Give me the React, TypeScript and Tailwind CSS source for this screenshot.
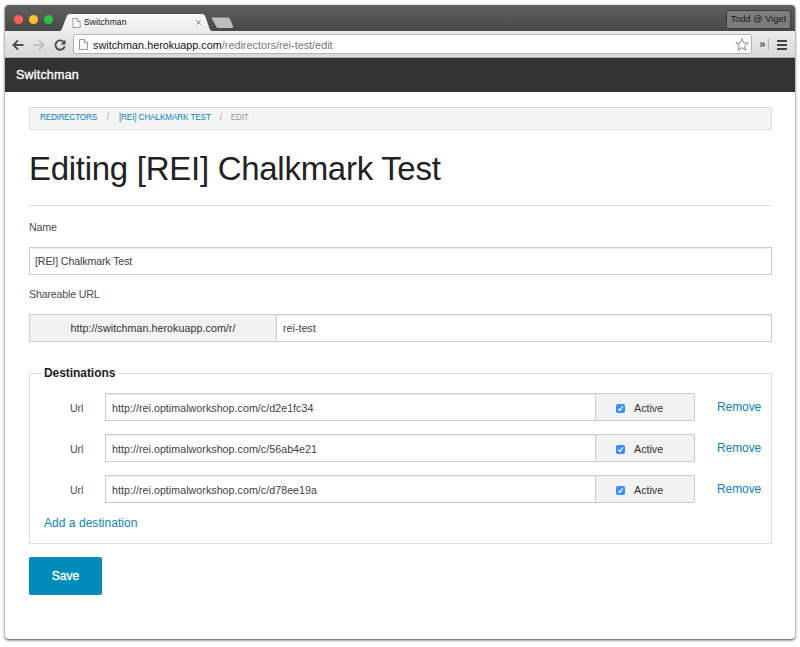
import React from "react";

const destinations = [
  "http://rei.optimalworkshop.com/c/d2e1fc34",
  "http://rei.optimalworkshop.com/c/56ab4e21",
  "http://rei.optimalworkshop.com/c/d78ee19a",
];

function PageIcon({ className }: { className: string }) {
  return (
    <svg className={className} viewBox="0 0 9 11" fill="#fafafa" stroke="#8c8c8c" strokeWidth="0.9">
      <path d="M.5.5h4.7l3.3 3.2v6.8h-8z" />
      <path d="M5.2.5v3.2h3.3" />
    </svg>
  );
}

function TitleBar() {
  return (
    <div className="flex h-[26px] items-start rounded-t-[4px] bg-linear-to-b from-[#606060] to-[#484848]">
      <div className="flex gap-[6px] pt-[10px] pl-[9px]">
        <span className="h-[9px] w-[9px] rounded-full bg-[#ff5f57]" />
        <span className="h-[9px] w-[9px] rounded-full bg-[#ffbd2e]" />
        <span className="h-[9px] w-[9px] rounded-full bg-[#28c940]" />
      </div>
      <div className="relative ml-[7px] h-[26px] w-[180px]">
        <svg className="absolute inset-0" width="180" height="26" viewBox="0 0 180 26">
          <defs>
            <linearGradient id="tab" x1="0" y1="0" x2="0" y2="1">
              <stop offset="0" stopColor="#fafafa" />
              <stop offset="1" stopColor="#ececec" />
            </linearGradient>
          </defs>
          <path d="M-1 26C1 26 1.500 25 2 23.500L6.500 12C7.300 9.700 8 9 10 9H142C144 9 144.700 9.700 145.500 12L149.500 23.500C150.200 25.200 151 26 153 26Z" fill="url(#tab)" />
          <path d="M152.500 12.500H167C169 12.500 169.700 13 170.500 15L172.900 21.200C173.300 22.500 173.100 23 171.800 23H158.800C157.100 23 156.600 22.500 155.900 21L152 14C151.500 13 151.500 12.500 152.500 12.500Z" fill="#bdbdbd" />
        </svg>
        <div className="relative flex h-full items-center pt-[9px] pl-[12px]">
          <PageIcon className="h-[10px] w-[9px]" />
          <span className="ml-[3px] text-[8.500px] leading-none tracking-[0.1px] text-[#111]">Switchman</span>
          <svg className="mr-[39px] ml-auto h-[5px] w-[5px]" viewBox="0 0 5 5" stroke="#777" strokeWidth="1">
            <path d="M.3.300l4.400 4.400M4.700.300.300 4.700" />
          </svg>
        </div>
      </div>
      <div className="mt-[5px] mr-[4px] ml-auto flex h-[19px] w-[65px] items-center justify-center rounded-[2px] border border-[#3c3c3c] bg-[#7e7e7e] text-[9px] tracking-[0.14px] whitespace-nowrap text-[#161616]">
        Todd @ Viget
      </div>
    </div>
  );
}

function Toolbar() {
  return (
    <div className="flex h-[27px] items-center border-b border-[#aaa] bg-linear-to-b from-[#ececec] to-[#d9d9d9] pl-[7px]">
      <svg className="mt-[1px] h-[12px] w-[12px]" viewBox="0 0 12 12" fill="none" stroke="#4d4d4d" strokeWidth="1.9">
        <path d="M11.500 6H1.600M6 1.300 1.400 6 6 10.700" />
      </svg>
      <svg className="mt-[1px] ml-[9px] h-[12px] w-[12px]" viewBox="0 0 12 12" fill="none" stroke="#b9b9b9" strokeWidth="1.700">
        <path d="M.500 6h9.900M6 1.300 10.600 6 6 10.700" />
      </svg>
      <svg className="mt-[1px] ml-[9px] h-[12px] w-[12px]" viewBox="0 0 12 12" fill="none" stroke="#4d4d4d" strokeWidth="1.900">
        <path d="M9.800 3A4.700 4.700 0 1 0 10.700 7.400" />
        <path d="M11.500.500v5H6.500z" fill="#4d4d4d" stroke="none" />
      </svg>
      <div className="ml-[7px] flex h-[20px] w-[679px] items-center rounded-[3px] border border-[#b4b4b4] bg-white pl-[5px]">
        <PageIcon className="h-[11px] w-[9px]" />
        <div className="mt-[2px] ml-[5px] text-[10.800px] leading-none tracking-[0.015px] whitespace-nowrap text-[#777]">
          <span className="text-[#111]">switchman.herokuapp.com</span>/redirectors/rei-test/edit
        </div>
        <svg className="mr-[2px] ml-auto h-[13px] w-[14px]" viewBox="0 0 14 13" fill="none" stroke="#888" strokeWidth="1" strokeLinejoin="round">
          <path d="M7 .700 8.700 4.800 13.200 5 9.700 7.800 10.900 12.200 7 9.700 3.100 12.200 4.300 7.800.800 5 5.300 4.800z" />
        </svg>
      </div>
      <svg className="ml-[8px] h-[5px] w-[5px]" viewBox="0 0 5 5" fill="none" stroke="#555" strokeWidth="1.200">
        <path d="M.300.500 2.200 2.500.300 4.500M2.800.500 4.700 2.500 2.800 4.500" />
      </svg>
      <span className="ml-[3px] h-[12px] w-px bg-[#b8b8b8]" />
      <span className="mt-[1px] ml-[8px] flex w-[10px] flex-col gap-[2px]">
        <i className="h-[2px] bg-[#444]" />
        <i className="h-[2px] bg-[#444]" />
        <i className="h-[2px] bg-[#444]" />
      </span>
    </div>
  );
}

function DestinationRow({ url }: { url: string }) {
  return (
    <div className="flex h-[28px] items-center">
      <span className="w-[61px] pt-[2px] pl-[26px] text-[10.700px] tracking-[-0.1px] text-[#4d4d4d]">Url</span>
      <div className="flex h-[28px] w-[491px] items-center border border-[#ccc] pt-[2px] pl-[6px] text-[10.700px] tracking-[0.03px] text-[#3f3f3f] shadow-[inset_0_1px_1px_rgba(0,0,0,0.08)]">{url}</div>
      <div className="-ml-px flex h-[28px] w-[100px] items-center rounded-r-[2px] border border-[#ccc] bg-[#f2f2f2] pt-[2px] pl-[20px] text-[10.700px] text-[#333]">
        <svg className="h-[9px] w-[9px]" viewBox="0 0 9 9">
          <rect width="9" height="9" rx="1.800" fill="#3b8ff8" />
          <path d="M2.300 4.800 3.900 6.500 6.700 2.400" fill="none" stroke="#fff" strokeWidth="1.200" />
        </svg>
        <span className="ml-[9px]">Active</span>
      </div>
      <a className="mb-[1px] ml-[22px] text-[12px] tracking-[-0.08px] text-[#0c82b8]">Remove</a>
    </div>
  );
}

export default function App() {
  return (
    <div className="h-[647px] w-[800px] overflow-hidden bg-white px-[5px] pt-[5px] font-['Liberation_Sans',Arial,sans-serif]">
      <div className="flex h-[634px] w-[790px] flex-col rounded-[4px] bg-white shadow-[0_1px_3px_rgba(0,0,0,0.75)]">
        <TitleBar />
        <Toolbar />
        <div className="flex h-[34px] items-center bg-[#333] pl-[11px] text-[12.500px] tracking-[0.2px] text-white [-webkit-text-stroke:0.350px_white]">Switchman</div>
        <main className="flex flex-col px-[24px] pt-[15px]">
          <nav className="flex h-[23px] w-[743px] items-center rounded-[2px] border border-[#dcdcdc] bg-[#f4f4f4] pl-[10px] text-[8.200px] whitespace-nowrap text-[#0c82b8]">
            <a className="tracking-[-0.23px]">REDIRECTORS</a>
            <span className="w-[22px] text-center text-[#999]">/</span>
            <a className="tracking-[-0.13px]">[REI] CHALKMARK TEST</a>
            <span className="w-[20px] text-center text-[#999]">/</span>
            <span className="tracking-[-0.22px] text-[#999]">EDIT</span>
          </nav>
          <h1 className="mt-[15px] h-[48px] text-[33px] leading-[48px] tracking-[-0.280px] whitespace-nowrap text-[#222]">Editing [REI] Chalkmark Test</h1>
          <hr className="mt-[12px] w-[743px] border-[#ddd]" />
          <label className="mt-[13px] h-[16px] text-[10.700px] leading-[16px] tracking-[-0.2px] text-[#4d4d4d]">Name</label>
          <div className="mt-[12px] flex h-[28px] w-[743px] items-center border border-[#ccc] pl-[5px] text-[10.700px] tracking-[-0.15px] text-[#3f3f3f] shadow-[inset_0_1px_1px_rgba(0,0,0,0.08)]">[REI] Chalkmark Test</div>
          <label className="mt-[11px] h-[16px] text-[10.700px] leading-[16px] tracking-[-0.2px] text-[#4d4d4d]">Shareable URL</label>
          <div className="mt-[12px] flex h-[28px] w-[743px] text-[10.700px]">
            <div className="flex w-[247px] items-center justify-center border border-r-0 border-[#ccc] bg-[#f2f2f2] tracking-[0.05px] text-[#333]">http://switchman.herokuapp.com/r/</div>
            <div className="flex flex-1 items-center border border-[#ccc] pl-[6px] text-[#3f3f3f] shadow-[inset_0_1px_1px_rgba(0,0,0,0.08)]">rei-test</div>
          </div>
          <section className="mt-[31px] h-[171px] w-[743px] border border-[#ddd] pl-[14px]">
            <h2 className="-mt-[9px] -ml-[2px] h-[16px] w-[76px] bg-white pl-[2px] text-[12px] leading-[16px] font-bold tracking-[-0.06px] text-[#222]">Destinations</h2>
            <div className="mt-[12px] flex flex-col gap-[13px]">
              {destinations.map((url) => (
                <DestinationRow key={url} url={url} />
              ))}
            </div>
            <a className="mt-[12px] block text-[12px] leading-[16px] tracking-[0.04px] text-[#0c82b8]">Add a destination</a>
          </section>
          <button className="mt-[13px] h-[38px] w-[73px] rounded-[2px] bg-[#008cba] text-[12px] text-white [-webkit-text-stroke:0.350px_white]">Save</button>
        </main>
      </div>
    </div>
  );
}
